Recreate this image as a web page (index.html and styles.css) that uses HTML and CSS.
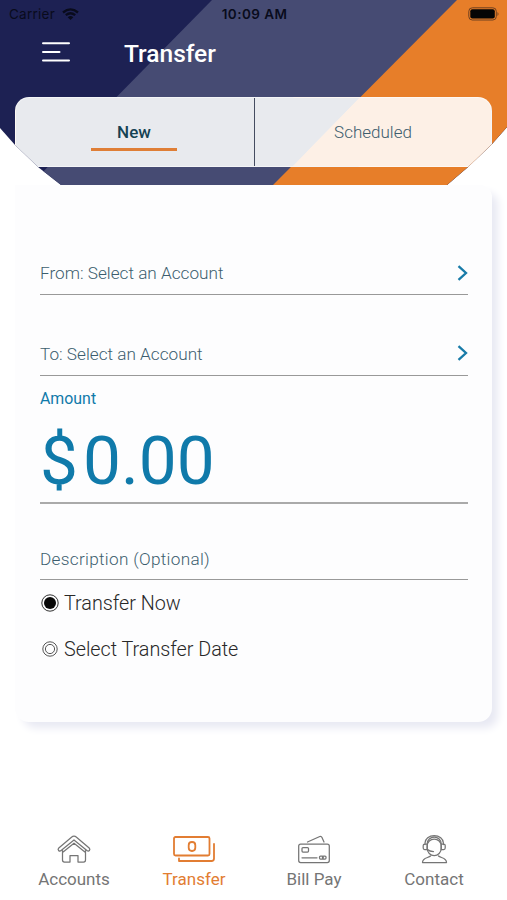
FILE: index.html
```html
<!DOCTYPE html>
<html lang="en">
<head>
<meta charset="utf-8">
<title>Transfer</title>
<link rel="stylesheet" href="styles.css">
</head>
<body>
<div class="app">
  <header class="header">
    <svg class="backdrop" viewBox="0 0 507 185" aria-hidden="true">
      <path fill="#1d2153" d="M0 0h507v185H0z"/>
      <path fill="#464b73" d="M212 0h295v185H30z"/>
      <path fill="#e77e29" d="M457 0h50v185H273z"/>
    </svg>
    <div class="status">
      <div class="carrier"><span>Carrier</span>
        <svg width="17" height="12" viewBox="0 0 17 12" fill="none" stroke="#090b1c" stroke-width="2.3"><path d="M1 4.500Q8.500-1.700 16 4.500M3.800 7.200Q8.500 3.300 13.200 7.200"/><path fill="#090b1c" stroke="none" d="M5.700 9.200Q8.500 7 11.300 9.200L8.500 12z"/></svg>
      </div>
      <div class="time">10:09 AM</div>
      <svg class="battery" width="32" height="14" viewBox="0 0 32 14"><rect x=".8" y=".8" width="27.500" height="12.200" rx="3.500" fill="none" stroke="#6e4020"/><rect x="2.300" y="2.300" width="24.500" height="9.200" rx="2" fill="#050505"/><path d="M29.500 5q2 2 0 4z" fill="#6e4020"/></svg>
    </div>
    <div class="titlebar">
      <svg class="menu" width="28" height="22" viewBox="0 0 28 22" stroke="#fff" stroke-width="2" stroke-linecap="round"><path d="M1 2.300h26M1 11h16.500M1 19.500h26"/></svg>
      <h1>Transfer</h1>
    </div>
    <nav class="tabs">
      <div class="tab active"><span>New</span></div>
      <div class="tab"><span>Scheduled</span></div>
    </nav>
  </header>
  <main class="card">
    <div class="row from"><span>From: Select an Account</span><svg width="11" height="16" viewBox="0 0 11 16"><path d="M1.500 1.200L9 8l-7.500 6.800"/></svg></div>
    <div class="row to"><span>To: Select an Account</span><svg width="11" height="16" viewBox="0 0 11 16"><path d="M1.500 1.200L9 8l-7.500 6.800"/></svg></div>
    <div class="amount"><div class="label">Amount</div><div class="value"><span class="currency">$</span><span>0.00</span></div></div>
    <div class="row description"><span>Description (Optional)</span></div>
    <div class="option now"><svg width="20" height="20" viewBox="0 0 20 20"><circle cx="10" cy="10" r="8.200" fill="none" stroke="#333" stroke-width="1"/><circle cx="10" cy="10" r="6" fill="#080808"/></svg><span>Transfer Now</span></div>
    <div class="option date"><svg width="20" height="20" viewBox="0 0 20 20" fill="none" stroke="#555"><circle cx="10" cy="10" r="7.200"/><circle cx="10" cy="10" r="4.600"/></svg><span>Select Transfer Date</span></div>
  </main>
  <footer class="bottom">
    <div class="item accounts"><svg width="44" height="32" viewBox="0 0 44 32"><path d="M22 4.200q-1.300 0-2.500 1L6.800 16q-1.300 1.300-.2 2.500t2.500.1L22 8l12.900 10.600q1.500 1 2.500-.1t-.2-2.500L24.500 5.200q-1.200-1-2.500-1zM10.500 18.500V28q0 2 2 2H18v-6.500h8V30h5.500q2 0 2-2v-9.500M10.500 20.500L22 11.200l11.500 9.300"/></svg><span>Accounts</span></div>
    <div class="item active transfer"><svg width="44" height="32" viewBox="0 0 44 32"><g stroke-width="1.800"><rect x="2" y="5" width="35.500" height="18.500" rx="1.500"/><path d="M42 12v14.500q0 2.500-2.500 2.500H7v-2.500"/><rect x="16.700" y="10" width="6.600" height="9" rx="3.200"/></g></svg><span>Transfer</span></div>
    <div class="item billpay"><svg width="44" height="32" viewBox="0 0 44 32"><rect x="6.700" y="12" width="30.600" height="18.500" rx="2"/><path d="M15.500 10L27.800 4.500q1.500-.5 2.200 1l2 4.500M10 25.800h15"/><rect x="10" y="15.500" width="6.500" height="4.500" rx="1"/><rect x="27.500" y="24" width="3.700" height="3" rx="1"/><rect x="30.500" y="24" width="3.500" height="3" rx="1"/></svg><span>Bill Pay</span></div>
    <div class="item contact"><svg width="44" height="32" viewBox="0 0 44 32"><rect x="15.200" y="7" width="14" height="16.500" rx="7"/><path d="M13 12.500V11a9.200 7.500 0 0 1 18.400 0v1.500M15.200 12a7 7 0 0 1 14 0M15.200 12h-2.500q-1.500 0-1.500 1.500V16q0 1.500 1.500 1.500h2.500zM29.200 12h2.500q1.500 0 1.500 1.500V16q0 1.500-1.500 1.500h-2.500zM15.500 17.500q2 2 6 2M18.500 24c-2 2-8 1.500-8 6.500h24c0-5-6-4.500-8-6.500"/></svg><span>Contact</span></div>
  </footer>
</div>
</body>
</html>
```
FILE: styles.css
```css
* { box-sizing: border-box; }
body { margin: 0; background: #fff; font-family: Roboto, "Liberation Sans", sans-serif; }
.app { width: 507px; height: 900px; display: flex; flex-direction: column; overflow: hidden; }
.app span { white-space: nowrap; }
.header { position: relative; flex: none; height: 185px; clip-path: polygon(0 0, 507px 0, 507px 127px, 492px 144px, 468px 167px, 447px 185px, 61px 185px, 38px 167px, 15px 145px, 0 128px); }
.backdrop { position: absolute; inset: 0; width: 507px; height: 185px; }
.status, .titlebar, .tabs { position: relative; }
.status { height: 28px; display: grid; grid-template-columns: 1fr auto 1fr; align-items: center; padding: 0 7px 0 9px; font-family: Inter, sans-serif; font-size: 13.500px; color: #090b1c; }
.carrier { display: flex; align-items: center; gap: 7px; letter-spacing: .25px; }
.time { font-weight: 600; letter-spacing: .45px; }
.battery { justify-self: end; margin-top: -1px; }
.titlebar { height: 69px; display: flex; padding: 12px 0 0 42px; }
.menu { margin-top: 1px; }
h1 { margin: 0 0 0 54px; color: #fff; font-size: 24.500px; line-height: 28px; font-weight: 500; }
.tabs { margin: 0 15px; height: 70px; width: 477px; display: grid; grid-template-columns: 239px 1fr; border-radius: 14px; border: 1px solid #fff8; overflow: hidden; background: linear-gradient(134.300deg, #e8eaee 0 63.300%, #fdf0e6 63.500%); }
.tab { display: flex; flex-direction: column; align-items: center; padding-top: 24px; color: #3c5d6e; font-size: 17px; line-height: 22px; font-weight: 300; }
.tab span { position: relative; top: -1px; }
.tab.active { color: #154253; font-weight: 500; border-right: 1px solid #454c60; padding-right: 2px; }
.tab.active::after { content: ""; width: 86px; height: 2.500px; margin-top: 4px; background: #df7e36; }
.card { flex: none; height: 537px; margin: 0 15px; padding: 0 24px 0 25px; border-radius: 0 12px 14px 14px; background: #fdfdfe; box-shadow: 7px 7px 8px -1px #e8e9f3; color: #3c5d6e; }
.row { display: flex; justify-content: space-between; align-items: center; border-bottom: 1.500px solid #999; font-size: 17.200px; font-weight: 300; }
.row svg { fill: none; stroke: #187ba8; stroke-width: 2.300; margin-top: -1px; }
.from { height: 110px; padding-top: 67px; }
.to { height: 81px; padding-top: 37px; }
.amount { height: 128px; border-bottom: 2px solid #aaa; color: #107aaa; padding-top: 11px; }
.label { font-size: 15.900px; line-height: 24px; }
.value { display: flex; font-size: 67.500px; line-height: 98px; margin-top: 1px; }
.currency { width: 43px; }
.description { height: 76px; padding-top: 35px; letter-spacing: .3px; }
.option { display: flex; align-items: center; height: 46px; color: #282828; font-size: 19.800px; font-weight: 300; gap: 4px; }
.date span, .now span { letter-spacing: -.02px; }
.bottom { margin-top: auto; height: 68px; display: grid; grid-template-columns: repeat(4, 120px); padding-left: 14px; color: #757575; }
.item { display: flex; flex-direction: column; align-items: center; font-size: 17px; line-height: 22px; }
.item svg { flex: none; fill: none; stroke: currentColor; stroke-width: 1.250; stroke-linejoin: round; stroke-linecap: round; }
.item span { margin-top: 4px; }
.item.active { color: #e27d32; }
```
